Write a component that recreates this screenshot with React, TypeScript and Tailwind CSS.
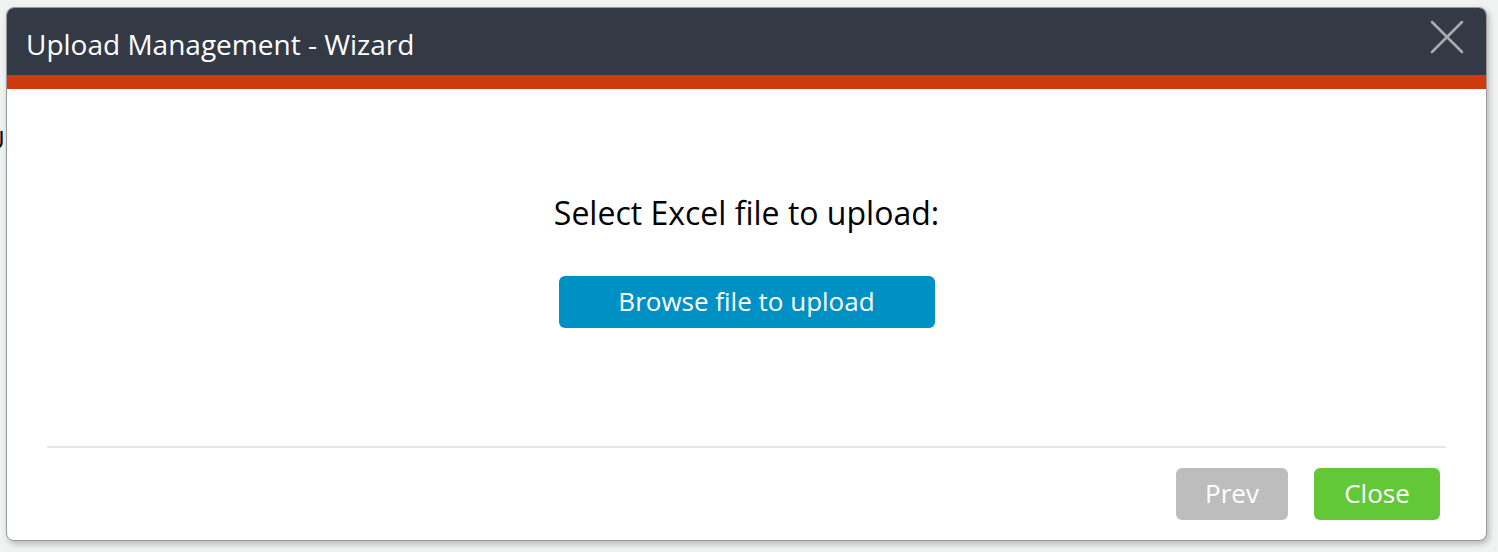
import React from "react";

const font = { fontFamily: '"Open Sans", "Noto Sans", sans-serif' };

export default function App() {
  return (
    <div className="relative w-[1498px] h-[552px] overflow-hidden bg-[#f1f2f2]" style={font}>
      {/* page content peeking out behind the modal */}
      <span className="absolute left-[-14px] top-[120px] text-[26px] text-black">U</span>

      <div className="relative pl-[6px] pt-[7px]">
        <div className="w-[1481px] h-[534px] flex flex-col rounded-[8px] overflow-hidden bg-white border border-[#9a9a9a] shadow-[2px_3px_6px_rgba(0,0,0,0.25)]">
          {/* header */}
          <div className="h-[67px] shrink-0 bg-[#343a45] flex items-center justify-between pl-[19px] pr-[22px]">
            <h1 className="text-white text-[28px] leading-none pt-[4px]">Upload Management - Wizard</h1>
            <svg width="34" height="34" viewBox="0 0 34 34" className="mb-[9px]">
              <path d="M2 2 L32 32 M32 2 L2 32" stroke="#a9abae" strokeWidth="2.5" strokeLinecap="round" />
            </svg>
          </div>
          <div className="h-[14px] shrink-0 bg-[#cf3a0c]" />

          {/* body */}
          <div className="flex-1 flex flex-col items-center pt-[108px]">
            <p className="text-[32px] text-black leading-none">Select Excel file to upload:</p>
            <button className="mt-[47px] w-[376px] h-[52px] rounded-[6px] bg-[#0091c4] text-white text-[26px] leading-none pb-[2px]">
              Browse file to upload
            </button>
          </div>

          {/* footer */}
          <div className="mx-[40px] h-[2px] bg-[#e6e6e6]" />
          <div className="flex justify-end gap-[26px] pt-[20px] pb-[20px] pr-[46px]">
            <button className="w-[112px] h-[52px] rounded-[6px] bg-[#bdbdbd] text-white text-[26px] leading-none pb-[2px]">
              Prev
            </button>
            <button className="w-[126px] h-[52px] rounded-[6px] bg-[#62c837] text-white text-[26px] leading-none pb-[2px]">
              Close
            </button>
          </div>
        </div>
      </div>
    </div>
  );
}
